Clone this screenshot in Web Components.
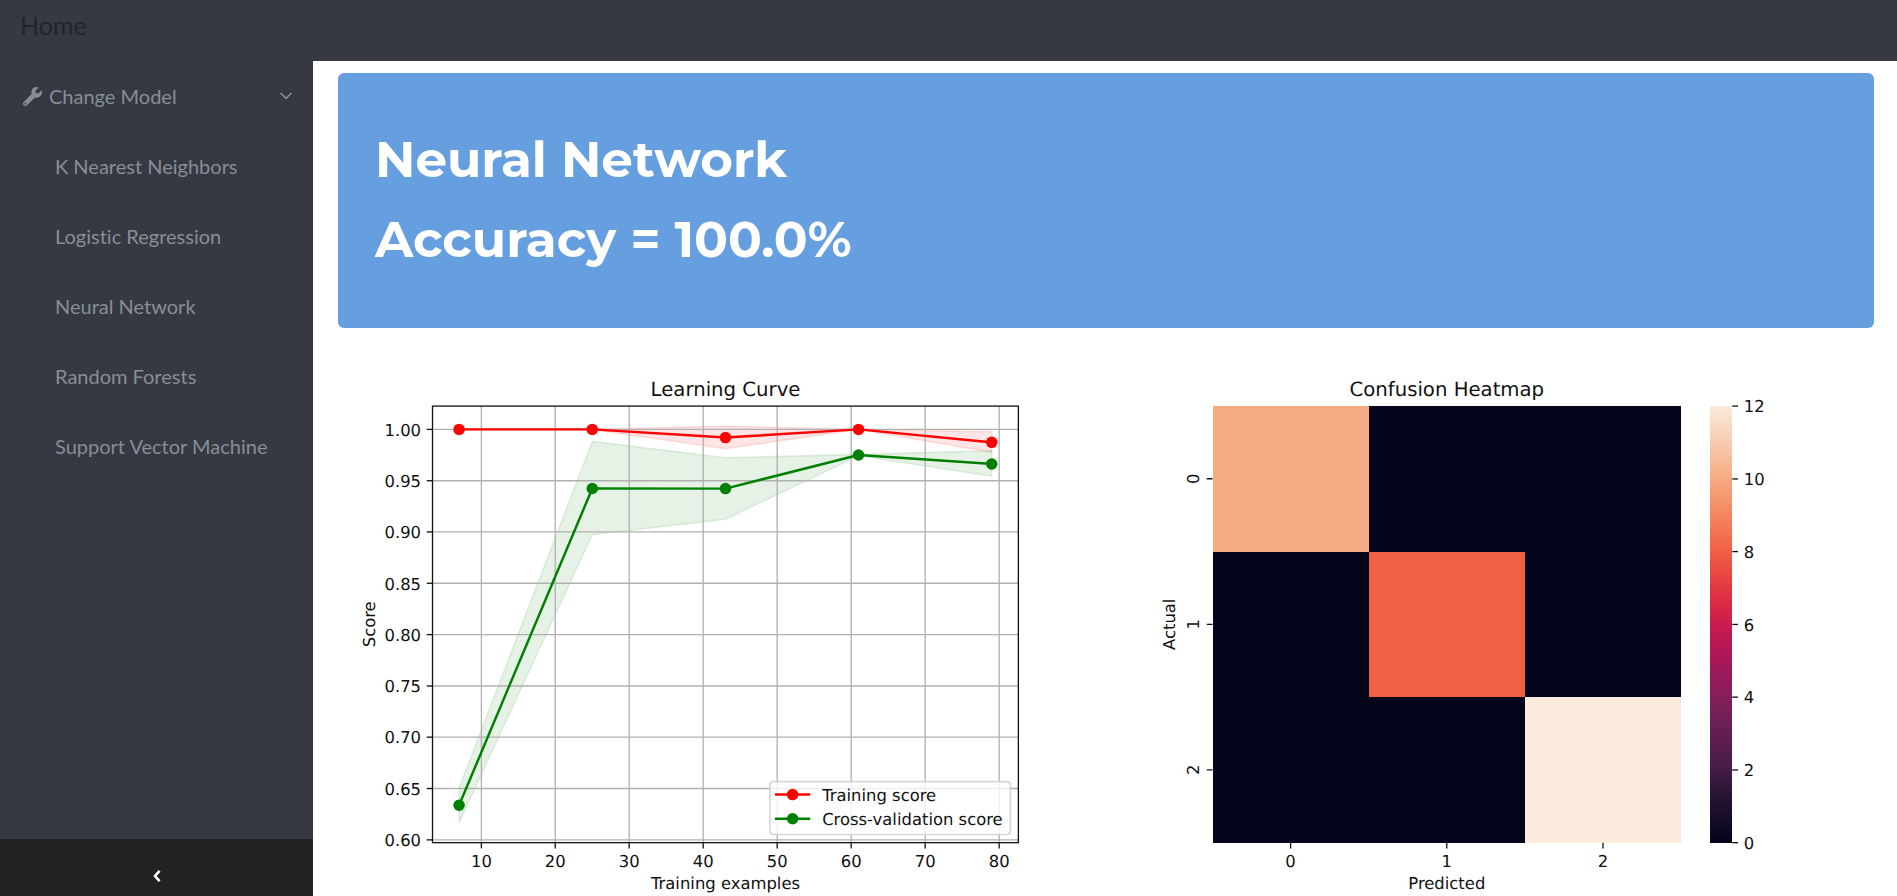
<!DOCTYPE html>
<html lang="en">
<head>
<meta charset="utf-8">
<title>Home</title>
<style>
  body { margin: 0; font-family: Lato, "Liberation Sans", sans-serif; font-variant-ligatures: none; background: #fff; }
</style>
</head>
<body>
<app-shell>
  <app-bar slot="bar">Home</app-bar>
  <side-menu slot="side" label="Change Model">
    <menu-link>K Nearest Neighbors</menu-link>
    <menu-link>Logistic Regression</menu-link>
    <menu-link>Neural Network</menu-link>
    <menu-link>Random Forests</menu-link>
    <menu-link>Support Vector Machine</menu-link>
  </side-menu>
  <result-banner>
    <span slot="model">Neural Network</span>
    <span slot="score">Accuracy = 100.0%</span>
  </result-banner>
  <chart-row>
    <learning-curve></learning-curve>
    <confusion-heatmap></confusion-heatmap>
  </chart-row>
</app-shell>

<script>
function define(name, html) {
  customElements.define(name, class extends HTMLElement {
    constructor() {
      super();
      this.attachShadow({ mode: 'open' }).innerHTML = typeof html === 'function' ? html(this) : html;
    }
  });
}

define('app-shell', `
  <style>
    :host { display: grid; grid-template: auto minmax(0, 1fr) / 313px minmax(0, 1fr); height: 100vh; }
    header { grid-column: 1 / 3; }
    aside { display: grid; }
    main { padding: 12px 23px 0 25px; overflow: auto; scrollbar-width: none;
      display: flex; flex-direction: column; gap: 10px; }
  </style>
  <header><slot name="bar"></slot></header>
  <aside><slot name="side"></slot></aside>
  <main><slot></slot></main>`);

define('app-bar', `
  <style>
    :host { display: block; background: #363942; padding: 10px 20px 21px; }
    a { display: block; font-size: 25px; line-height: 30px; color: #212529; text-decoration: none; }
  </style>
  <a href="#"><slot></slot></a>`);

define('side-menu', el => `
  <style>
    :host { display: flex; flex-direction: column; background: #363942; }
    button { font: inherit; border: 0; cursor: pointer; }
    .toggle { display: flex; align-items: center; gap: 7px; height: 70px; padding: 0 21px 0 23px;
      background: none; color: #868e96; font-size: 20px; line-height: 30px; text-align: left; }
    .toggle span { flex: 1; }
    svg { display: block; flex: none; }
    nav { flex: 1; }
    .collapse { display: flex; justify-content: center; align-items: center; height: 57px;
      padding: 16px 0 0; background: #222; color: #fff; }
  </style>
  <button class="toggle" type="button" aria-expanded="true">
    <svg width="19" height="19" viewBox="0 0 512 512" fill="currentColor" aria-hidden="true"><path d="M507.73 109.1c-2.24-9.03-13.54-12.09-20.12-5.51l-74.36 74.36-67.88-11.31-11.31-67.88 74.36-74.36c6.62-6.62 3.43-17.9-5.66-20.16-47.38-11.74-99.55.91-136.58 37.93-39.64 39.64-50.55 97.1-34.05 147.2L18.74 402.76c-24.99 24.99-24.99 65.51 0 90.5 24.99 24.99 65.51 24.99 90.5 0l213.21-213.21c50.12 16.71 107.47 5.68 147.37-34.22 37.07-37.07 49.7-89.32 37.91-136.73zM64 472c-13.25 0-24-10.75-24-24 0-13.26 10.75-24 24-24s24 10.74 24 24c0 13.25-10.75 24-24 24z"/></svg>
    <span>${el.getAttribute('label')}</span>
    <svg width="12" height="8" viewBox="0 0 12 8" fill="none" stroke="currentColor" stroke-width="1.5" aria-hidden="true"><path d="M.6 1 6 6.4 11.4 1"/></svg>
  </button>
  <nav><slot></slot></nav>
  <button class="collapse" type="button" aria-label="Collapse sidebar">
    <svg width="8" height="12" viewBox="0 0 8 12" fill="none" stroke="currentColor" stroke-width="2.6" aria-hidden="true"><path d="M6.6 .8 2 6l4.6 5.2"/></svg>
  </button>`);

define('menu-link', `
  <style>
    :host { display: block; }
    a { display: block; padding: 20px 16px 20px 55px; font-size: 20px; line-height: 30px;
      color: #868e96; text-decoration: none; }
  </style>
  <a href="#"><slot></slot></a>`);

define('result-banner', `
  <style>
    :host { display: block; background: #669fe0; border-radius: 6px; padding: 47px 37px 48px; color: #fff; }
    h1 { margin: 0; font: 700 50px/80px Montserrat, Inter, sans-serif; }
  </style>
  <h1><slot name="model"></slot></h1>
  <h1><slot name="score"></slot></h1>`);

define('chart-row', `
  <style>:host { display: grid; grid-template-columns: 1fr 1fr; gap: 24px; }</style>
  <slot></slot>`);

const chartStyle = `
  <style>
    :host { display: block; }
    svg { display: block; width: 100%; height: auto; font-family: "DejaVu Sans", sans-serif; font-size: 100px; fill: #111; text-rendering: geometricPrecision; }
    .title { font-size: 120px; }
    .mid { text-anchor: middle; }
    .end { text-anchor: end; }
    .axis { stroke: #111; stroke-width: 8; fill: none; }
    .grid { stroke: #b0b0b0; stroke-width: 8; fill: none; }
    .line { stroke-width: 15; fill: none; stroke-linecap: square; stroke-linejoin: round; }
    .band { fill-opacity: .1; stroke-opacity: .1; stroke-width: 10; }
  </style>`;
const TOP = 415, BOTTOM = 3076, LEFT = 576;

define('learning-curve', () => {
  const RIGHT = 4147;
  const x = v => Math.round(LEFT + (v - 3.4) * 45.09);
  const y = v => Math.round(557 + (1 - v) * 6254);
  const sizes = [7, 25, 43, 61, 79];
  const series = [
    { name: 'Training score', color: 'red', mean: [1, 1, .992, 1, .9873],
      hi: [1, 1, 1.0032, 1, .998], lo: [1, 1, .9811, 1, .9776] },
    { name: 'Cross-validation score', color: 'green', mean: [.6337, .9425, .9422, .975, .9662],
      hi: [.6506, .9883, .9723, .9757, .9792], lo: [.6168, .8973, .9126, .9743, .9542] }
  ];
  const pts = a => a.map((v, i) => [x(sizes[i]), y(v)]);
  const xs = [10, 20, 30, 40, 50, 60, 70, 80];
  const ys = [.6, .65, .7, .75, .8, .85, .9, .95, 1];
  return chartStyle + `
  <svg viewBox="0 0 4608 3456" role="img" aria-label="Learning Curve">
    ${series.map(s => `<polygon class="band" fill="${s.color}" stroke="${s.color}" points="${pts(s.hi).concat(pts(s.lo).reverse()).join(' ')}"/>`).join('')}
    ${xs.map(v => `<path class="grid" d="M${x(v)} ${TOP}V${BOTTOM}"/><path class="axis" d="M${x(v)} ${BOTTOM}v35"/><text class="mid" x="${x(v)}" y="3222">${v}</text>`).join('')}
    ${ys.map(v => `<path class="grid" d="M${LEFT} ${y(v)}H${RIGHT}"/><path class="axis" d="M${LEFT} ${y(v)}h-35"/><text class="end" x="506" y="${y(v) + 38}">${v.toFixed(2)}</text>`).join('')}
    ${series.map(s => `<polyline class="line" stroke="${s.color}" points="${pts(s.mean).join(' ')}"/>` +
      pts(s.mean).map(p => `<circle cx="${p[0]}" cy="${p[1]}" r="35" fill="${s.color}"/>`).join('')).join('')}
    <rect class="axis" x="${LEFT}" y="${TOP}" width="${RIGHT - LEFT}" height="${BOTTOM - TOP}"/>
    <rect x="2633" y="2704" width="1465" height="322" rx="20" fill="#fff" fill-opacity=".8" stroke="#ccc" stroke-opacity=".8" stroke-width="10"/>
    ${series.map((s, i) => `<path class="line" stroke="${s.color}" d="M2671 ${2783 + i * 147}h200"/><circle cx="2771" cy="${2783 + i * 147}" r="35" fill="${s.color}"/><text x="2951" y="${2820 + i * 147}">${s.name}</text>`).join('')}
    <text class="title mid" x="2362" y="355">Learning Curve</text>
    <text class="mid" x="2362" y="3360">Training examples</text>
    <text class="mid" transform="translate(225 1745) rotate(-90)">Score</text>
  </svg>`;
});

define('confusion-heatmap', () => {
  const colors = { 0: '#03051a', 8: '#f06043', 10: '#f6aa82', 12: '#faebdd' };
  const data = [[10, 0, 0], [0, 8, 0], [0, 0, 12]];
  const W = 952, H = 887;
  /* Colour map stops, placed in 42nds of the scale. */
  const ramp = [[0, '#03051a'], [6, '#35193e'], [7, '#451c47'], [12, '#701f57'], [14, '#841e5a'],
    [18, '#ad1759'], [21, '#cb1b4f'], [24, '#e13342'], [28, '#f06043'], [30, '#f37651'],
    [35, '#f6aa82'], [36, '#f6b48f'], [42, '#faebdd']];
  const cy = v => Math.round(BOTTOM - v * (BOTTOM - TOP) / 12);
  return chartStyle + `
  <svg viewBox="0 0 4608 3456" role="img" aria-label="Confusion Heatmap">
    <defs><linearGradient id="ramp" x1="0" y1="1" x2="0" y2="0">
      ${ramp.map(([p, c]) => `<stop offset="${p / 42}" stop-color="${c}"/>`).join('')}
    </linearGradient></defs>
    <g shape-rendering="crispEdges">
      ${data.map((row, r) => row.map((v, c) => `<rect x="${LEFT + c * W}" y="${TOP + r * H}" width="${W}" height="${H}" fill="${colors[v]}"/>`).join('')).join('')}
      <rect x="3611" y="${TOP}" width="133" height="${BOTTOM - TOP}" fill="url(#ramp)"/>
    </g>
    ${[0, 1, 2].map(i => `<path class="axis" d="M${LEFT + W / 2 + i * W} ${BOTTOM}v35M${LEFT} ${TOP + 443 + i * H}h-35"/>
      <text class="mid" x="${LEFT + W / 2 + i * W}" y="3222">${i}</text>
      <text class="mid" transform="translate(496 ${TOP + 443 + i * H}) rotate(-90)">${i}</text>`).join('')}
    ${[0, 2, 4, 6, 8, 10, 12].map(v => `<path class="axis" d="M3744 ${cy(v)}h35"/><text x="3814" y="${cy(v) + 38}">${v}</text>`).join('')}
    <text class="title mid" x="2004" y="355">Confusion Heatmap</text>
    <text class="mid" x="2004" y="3360">Predicted</text>
    <text class="mid" transform="translate(347 1745) rotate(-90)">Actual</text>
  </svg>`;
});
</script>
</body>
</html>
